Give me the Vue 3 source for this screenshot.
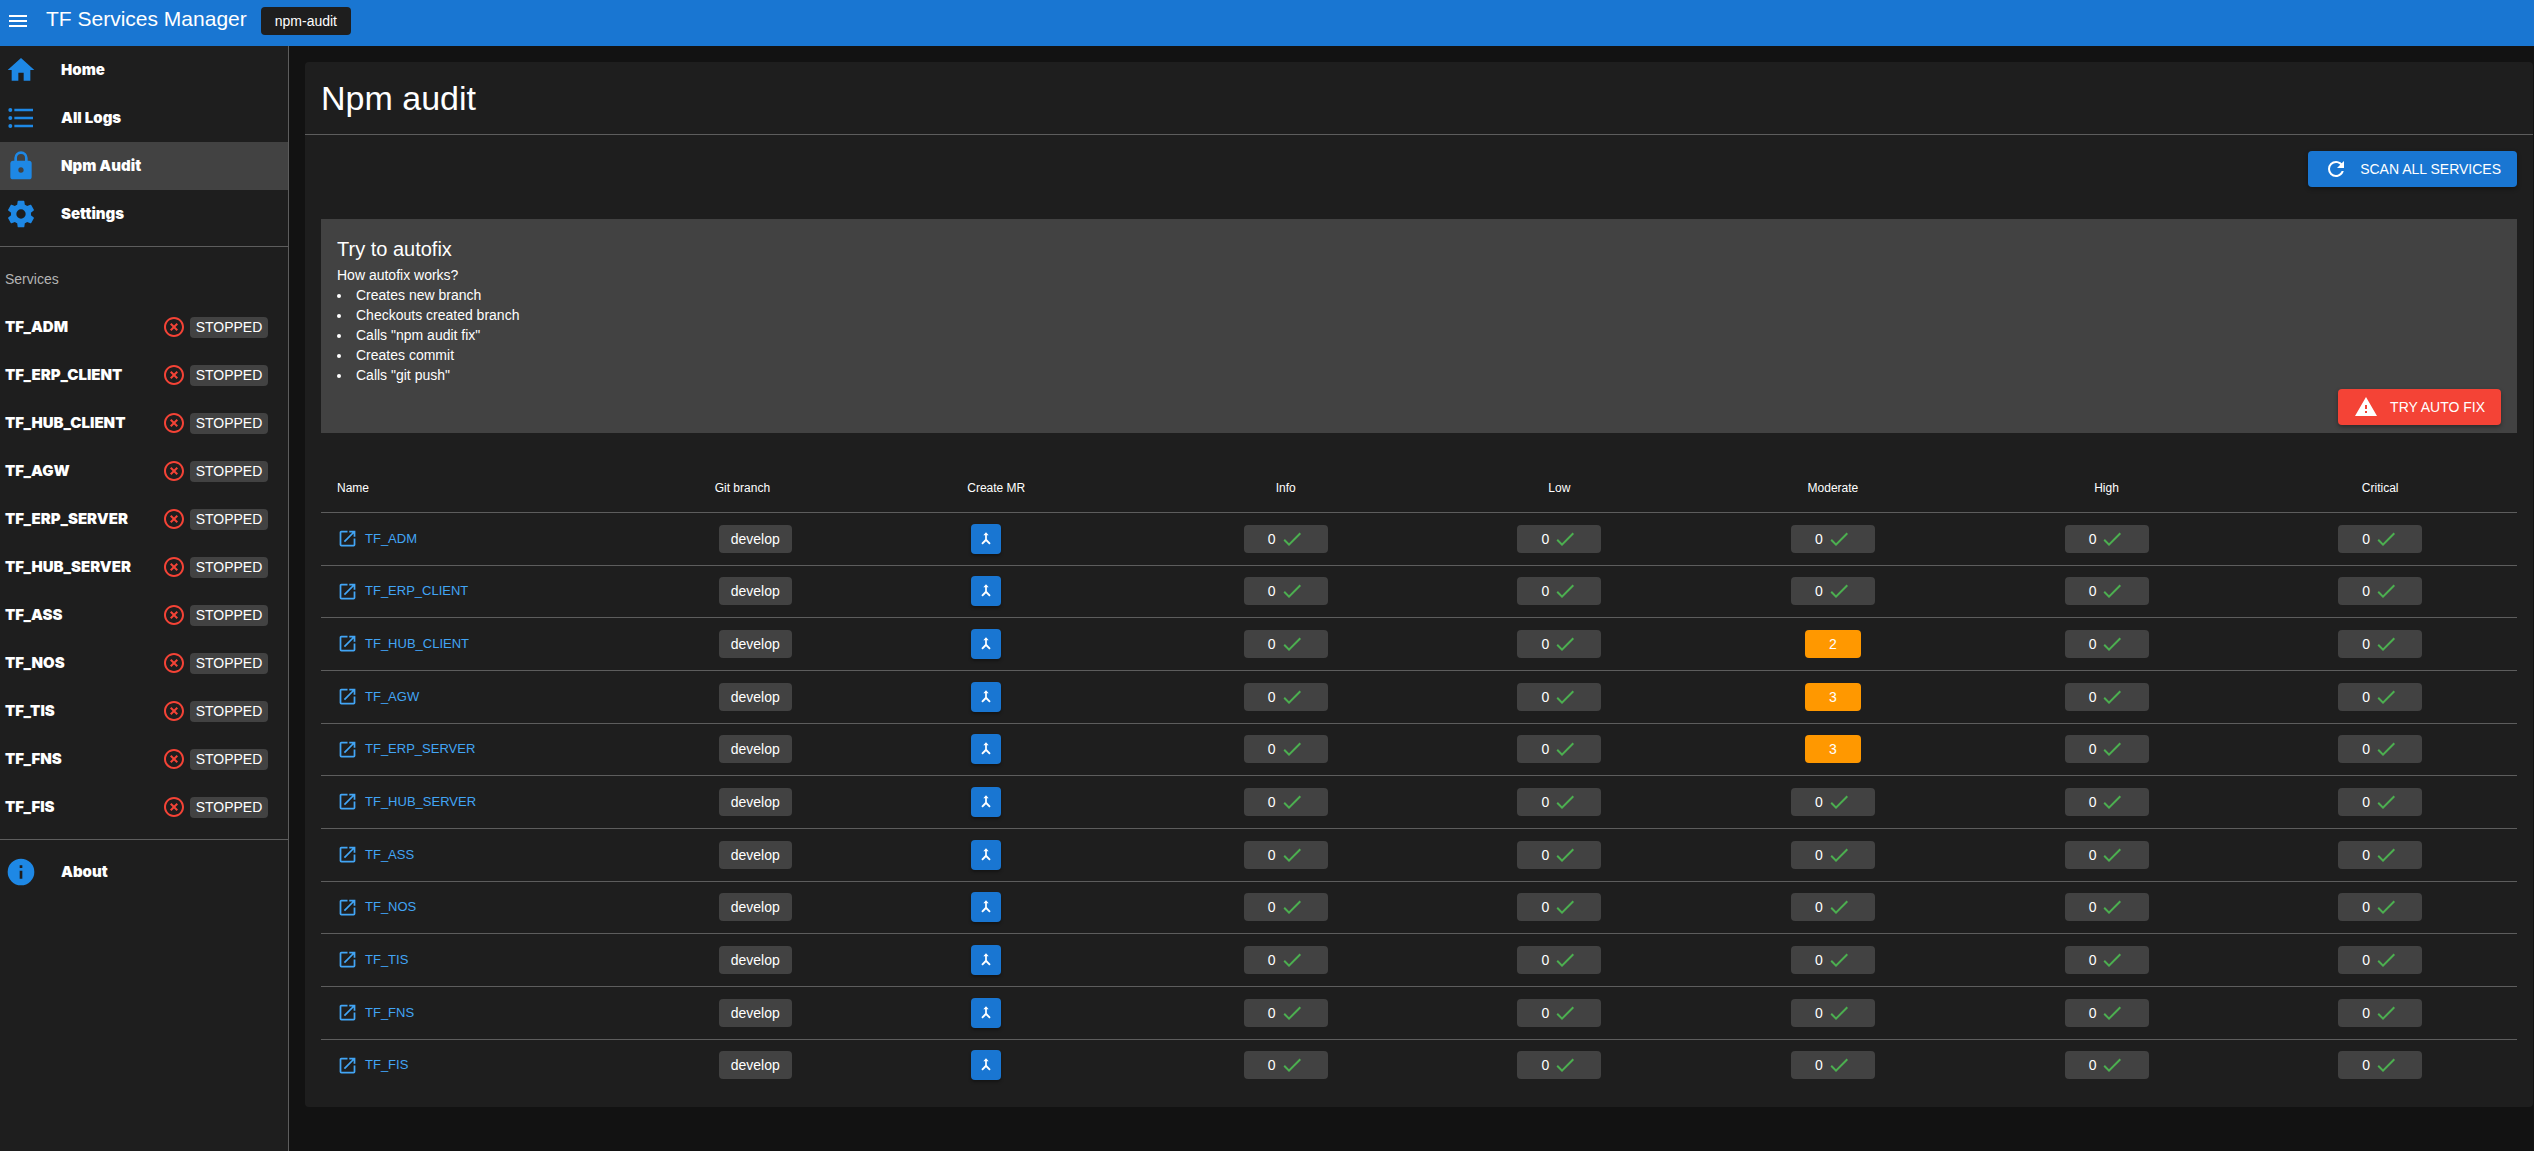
<script setup>
import { ref } from 'vue'

const icons = {
  menu: 'M3,6H21V8H3V6M3,11H21V13H3V11M3,16H21V18H3V16Z',
  home: 'M10,20V14H14V20H19V12H22L12,3L2,12H5V20H10Z',
  list: 'M7,5H21V7H7V5M7,13V11H21V13H7M4,4.5A1.5,1.5 0 0,1 5.5,6A1.5,1.5 0 0,1 4,7.5A1.5,1.5 0 0,1 2.5,6A1.5,1.5 0 0,1 4,4.5M4,10.5A1.5,1.5 0 0,1 5.5,12A1.5,1.5 0 0,1 4,13.5A1.5,1.5 0 0,1 2.5,12A1.5,1.5 0 0,1 4,10.5M7,19V17H21V19H7M4,16.5A1.5,1.5 0 0,1 5.5,18A1.5,1.5 0 0,1 4,19.5A1.5,1.5 0 0,1 2.5,18A1.5,1.5 0 0,1 4,16.5Z',
  lock: 'M12,17A2,2 0 0,0 14,15C14,13.89 13.1,13 12,13A2,2 0 0,0 10,15A2,2 0 0,0 12,17M18,8A2,2 0 0,1 20,10V20A2,2 0 0,1 18,22H6A2,2 0 0,1 4,20V10C4,8.89 4.9,8 6,8H7V6A5,5 0 0,1 12,1A5,5 0 0,1 17,6V8H18M12,3A3,3 0 0,0 9,6V8H15V6A3,3 0 0,0 12,3Z',
  cog: 'M12,15.5A3.5,3.5 0 0,1 8.5,12A3.5,3.5 0 0,1 12,8.5A3.5,3.5 0 0,1 15.5,12A3.5,3.5 0 0,1 12,15.5M19.43,12.97C19.47,12.65 19.5,12.33 19.5,12C19.5,11.67 19.47,11.34 19.43,11L21.54,9.37C21.73,9.22 21.78,8.95 21.66,8.73L19.66,5.27C19.54,5.05 19.27,4.96 19.05,5.05L16.56,6.05C16.04,5.66 15.5,5.32 14.87,5.07L14.5,2.42C14.46,2.18 14.25,2 14,2H10C9.75,2 9.54,2.18 9.5,2.42L9.13,5.07C8.5,5.32 7.96,5.66 7.44,6.05L4.95,5.05C4.73,4.96 4.46,5.05 4.34,5.27L2.34,8.73C2.21,8.95 2.27,9.22 2.46,9.37L4.57,11C4.53,11.34 4.5,11.67 4.5,12C4.5,12.33 4.53,12.65 4.57,12.97L2.46,14.63C2.27,14.78 2.21,15.05 2.34,15.27L4.34,18.73C4.46,18.95 4.73,19.03 4.95,18.95L7.44,17.94C7.96,18.34 8.5,18.68 9.13,18.93L9.5,21.58C9.54,21.82 9.75,22 10,22H14C14.25,22 14.46,21.82 14.5,21.58L14.87,18.93C15.5,18.67 16.04,18.34 16.56,17.94L19.05,18.95C19.27,19.03 19.54,18.95 19.66,18.73L21.66,15.27C21.78,15.05 21.73,14.78 21.54,14.63L19.43,12.97Z',
  info: 'M13,9H11V7H13M13,17H11V11H13M12,2A10,10 0 0,0 2,12A10,10 0 0,0 12,22A10,10 0 0,0 22,12A10,10 0 0,0 12,2Z',
  closeCircle: 'M12,20C7.59,20 4,16.41 4,12C4,7.59 7.59,4 12,4C16.41,4 20,7.59 20,12C20,16.41 16.41,20 12,20M12,2C6.47,2 2,6.47 2,12C2,17.53 6.47,22 12,22C17.53,22 22,17.53 22,12C22,6.47 17.53,2 12,2M14.59,8L12,10.59L9.41,8L8,9.41L10.59,12L8,14.59L9.41,16L12,13.41L14.59,16L16,14.59L13.41,12L16,9.41L14.59,8Z',
  refresh: 'M17.65,6.35C16.2,4.9 14.21,4 12,4A8,8 0 0,0 4,12A8,8 0 0,0 12,20C15.73,20 18.84,17.45 19.73,14H17.65C16.83,16.33 14.61,18 12,18A6,6 0 0,1 6,12A6,6 0 0,1 12,6C13.66,6 15.14,6.69 16.22,7.78L13,11H20V4L17.65,6.35Z',
  alert: 'M13,14H11V10H13M13,18H11V16H13M1,21H23L12,2L1,21Z',
  open: 'M14,3V5H17.59L7.76,14.83L9.17,16.24L19,6.41V10H21V3M19,19H5V5H12V3H5C3.89,3 3,3.9 3,5V19A2,2 0 0,0 5,21H19A2,2 0 0,0 21,19V12H19V19Z',
  merge: 'M12,2L8,6.5H10.7V12.5L5,18.2L7,20.2L12,15.2L17,20.2L19,18.2L13.3,12.5V6.5H16L12,2Z',
  check: 'M21,7L9,19L3.5,13.5L4.91,12.09L9,16.17L19.59,5.59L21,7Z',
}

const nav = [
  { title: 'Home', icon: icons.home },
  { title: 'All Logs', icon: icons.list },
  { title: 'Npm Audit', icon: icons.lock },
  { title: 'Settings', icon: icons.cog },
]
const active = ref('Npm Audit')

const services = ['TF_ADM', 'TF_ERP_CLIENT', 'TF_HUB_CLIENT', 'TF_AGW', 'TF_ERP_SERVER', 'TF_HUB_SERVER', 'TF_ASS', 'TF_NOS', 'TF_TIS', 'TF_FNS', 'TF_FIS']
const levels = ['Info', 'Low', 'Moderate', 'High', 'Critical']
const found = {
  TF_HUB_CLIENT: { Moderate: 2 },
  TF_AGW: { Moderate: 3 },
  TF_ERP_SERVER: { Moderate: 3 },
}
const count = (service, level) => found[service]?.[level] ?? 0

const steps = ['Creates new branch', 'Checkouts created branch', 'Calls "npm audit fix"', 'Creates commit', 'Calls "git push"']
</script>

<template>
  <div class="app">
    <header class="bar">
      <button class="menu" aria-label="Menu">
        <svg class="i24" viewBox="0 0 24 24"><path :d="icons.menu" /></svg>
      </button>
      <div class="brand">TF Services Manager</div>
      <span class="crumb">npm-audit</span>
    </header>

    <div class="body">
      <aside class="side">
        <nav class="group">
          <a v-for="item in nav" :key="item.title" href="#" class="item" :class="{ active: active === item.title }" @click.prevent="active = item.title">
            <svg class="i32" viewBox="0 0 24 24"><path :d="item.icon" /></svg>
            <span>{{ item.title }}</span>
          </a>
        </nav>
        <div class="group services">
          <h2 class="subheader">Services</h2>
          <a v-for="s in services" :key="s" href="#" class="service">
            <span>{{ s }}</span>
            <svg class="i24" viewBox="0 0 24 24"><path :d="icons.closeCircle" /></svg>
            <span class="status">STOPPED</span>
          </a>
        </div>
        <nav class="group">
          <a href="#" class="item">
            <svg class="i32" viewBox="0 0 24 24"><path :d="icons.info" /></svg>
            <span>About</span>
          </a>
        </nav>
      </aside>

      <main class="main">
        <section class="card">
          <h1 class="title">Npm audit</h1>
          <div class="content">
            <div class="actions">
              <button class="btn blue">
                <svg class="i24" viewBox="0 0 24 24"><path :d="icons.refresh" /></svg>
                SCAN ALL SERVICES
              </button>
            </div>

            <div class="autofix">
              <h2>Try to autofix</h2>
              <p>How autofix works?</p>
              <ul>
                <li v-for="step in steps" :key="step">{{ step }}</li>
              </ul>
              <div class="fix">
                <button class="btn red">
                  <svg class="i24" viewBox="0 0 24 24"><path :d="icons.alert" /></svg>
                  TRY AUTO FIX
                </button>
              </div>
            </div>

            <table class="table">
              <colgroup>
                <col class="c-name"><col class="c-branch"><col class="c-mr">
                <col v-for="l in levels" :key="l">
              </colgroup>
              <thead>
                <tr>
                  <th>Name</th>
                  <th>Git branch</th>
                  <th>Create MR</th>
                  <th v-for="l in levels" :key="l" class="center">{{ l }}</th>
                </tr>
              </thead>
              <tbody>
                <tr v-for="s in services" :key="s">
                  <td>
                    <a href="#" class="link">
                      <svg class="i21" viewBox="0 0 24 24"><path :d="icons.open" /></svg>
                      <span>{{ s }}</span>
                    </a>
                  </td>
                  <td><span class="chip branch">develop</span></td>
                  <td>
                    <button class="mr" :aria-label="`Create MR for ${s}`">
                      <svg class="i16" viewBox="0 0 24 24"><path :d="icons.merge" /></svg>
                    </button>
                  </td>
                  <td v-for="l in levels" :key="l" class="center">
                    <span v-if="count(s, l)" class="chip warn">{{ count(s, l) }}</span>
                    <span v-else class="chip ok">
                      0
                      <svg class="i24" viewBox="0 0 24 24"><path :d="icons.check" /></svg>
                    </span>
                  </td>
                </tr>
              </tbody>
            </table>
          </div>
        </section>
      </main>
    </div>
  </div>
</template>

<style>
body {
  background: #121212;
}
</style>

<style scoped>
.app {
  min-height: 100vh;
  display: flex;
  flex-direction: column;
  color: #fff;
  font: 14px/20px "Liberation Sans", Arial, sans-serif;
}
.app * {
  box-sizing: border-box;
}
svg {
  fill: currentColor;
  flex: none;
  display: block;
}
.i16 { width: 16px; height: 16px; }
.i21 { width: 21px; height: 21px; }
.i24 { width: 24px; height: 24px; }
.i32 { width: 32px; height: 32px; }
a {
  color: inherit;
  text-decoration: none;
}
button {
  border: 0;
  padding: 0;
  color: #fff;
  font: inherit;
  cursor: pointer;
}
h1, h2, p, ul {
  margin: 0;
  padding: 0;
  font-weight: 400;
}

.bar {
  height: 46px;
  display: flex;
  align-items: flex-start;
  padding: 7px 6px;
  background: #1976d2;
}
.menu {
  margin: 2px 16px 0 0;
  background: none;
}
.brand {
  font-size: 21px;
  line-height: 24px;
}
.crumb {
  margin-left: 14px;
  padding: 4px 14px;
  border-radius: 4px;
  background: #1e1e1e;
}

.body {
  flex: 1;
  display: flex;
}
.side {
  width: 289px;
  flex: none;
  background: #1e1e1e;
  border-right: 1px solid #5d5d5d;
}
.group + .group {
  border-top: 1px solid #5d5d5d;
}
.group {
  padding-bottom: 8px;
}
.group:last-child {
  padding-top: 8px;
}
.item {
  height: 48px;
  display: flex;
  align-items: center;
  gap: 24px;
  padding: 0 5px;
  font: 900 15px/20px "Arial Black", Inter, sans-serif;
}
.item svg {
  color: #1e88e5;
}
.item.active {
  background: #424242;
}
.services {
  padding-top: 8px;
}
.subheader {
  padding: 14px 5px;
  color: #b4b4b4;
  font-size: 14px;
}
.service {
  height: 48px;
  display: grid;
  grid-template-columns: 1fr 24px 78px;
  align-items: center;
  column-gap: 4px;
  padding: 0 20px 0 5px;
  font: 900 15px/20px "Arial Black", Inter, sans-serif;
}
.service svg {
  color: #f44336;
}
.status {
  border-radius: 4px;
  background: #424242;
  text-align: center;
  font: 14px/21px "Liberation Sans", Arial, sans-serif;
}

.main {
  flex: 1;
  padding: 16px 1px 16px 16px;
}
.card {
  border-radius: 4px;
  background: #1e1e1e;
}
.title {
  padding: 16px;
  border-bottom: 1px solid #5d5d5d;
  font-size: 34px;
  line-height: 40px;
}
.content {
  padding: 16px;
}
.actions {
  display: flex;
  justify-content: flex-end;
  margin-bottom: 32px;
}
.btn {
  height: 36px;
  display: flex;
  align-items: center;
  gap: 12px;
  padding: 0 16px;
  border-radius: 4px;
  box-shadow: 0 2px 4px rgba(0, 0, 0, .35);
}
.blue { background: #1976d2; }
.red { background: #f44336; }
.autofix {
  padding: 16px 16px 8px;
  margin-bottom: 32px;
  background: #424242;
}
.autofix h2 {
  margin-bottom: 2px;
  font-size: 20px;
  line-height: 28px;
}
.autofix ul {
  list-style-position: inside;
}
.fix {
  display: flex;
  justify-content: flex-end;
  margin-top: 4px;
}

.table {
  width: 100%;
  table-layout: fixed;
  border-collapse: collapse;
}
.c-name { width: 17.2%; }
.c-branch { width: 11.5%; }
.c-mr { width: 9%; }
th, td {
  padding: 0 16px;
  text-align: left;
}
th {
  height: 47px;
  font-size: 12px;
  font-weight: 400;
}
td {
  height: 53px;
  border-top: 1px solid #5d5d5d;
}
tr:nth-child(3n + 2) td {
  height: 52px;
}
.center {
  text-align: center;
}
.link {
  display: flex;
  align-items: center;
  gap: 7px;
  color: #42a5f5;
  font-size: 13px;
}
.chip {
  height: 28px;
  display: inline-flex;
  align-items: center;
  justify-content: center;
  vertical-align: middle;
  border-radius: 4px;
  background: #424242;
}
.branch {
  margin-left: 4px;
  padding: 0 12px;
}
.ok {
  width: 84px;
  gap: 4px;
}
.ok svg {
  color: #4caf50;
}
.warn {
  width: 56px;
  background: #ff9800;
}
.mr {
  width: 30px;
  height: 30px;
  display: flex;
  align-items: center;
  justify-content: center;
  margin-left: 4px;
  border-radius: 4px;
  background: #1976d2;
  box-shadow: 0 2px 3px rgba(0, 0, 0, .35);
}
</style>
